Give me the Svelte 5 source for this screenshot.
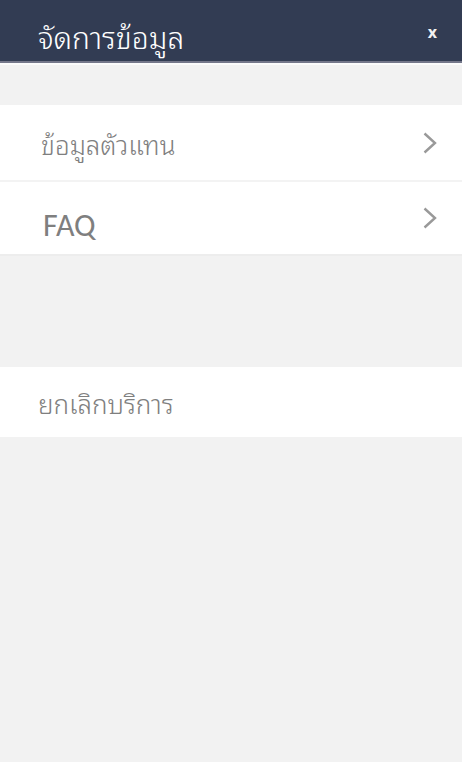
<script>
  const groups = [
    [
      { label: 'ข้อมูลตัวแทน', arrow: true },
      { label: 'FAQ', arrow: true, latin: true }
    ],
    [{ label: 'ยกเลิกบริการ', arrow: false }]
  ];
</script>

<div class="page">
  <header>
    <h1>จัดการข้อมูล</h1>
    <button class="close" aria-label="Close">x</button>
  </header>
  <main>
    {#each groups as group}
      <nav>
        {#each group as item}
          <a href="#item" class:latin={item.latin} class:plain={!item.arrow}>
            <span>{item.label}</span>
            {#if item.arrow}
              <svg viewBox="0 0 14 22" width="14" height="22" aria-hidden="true">
                <path d="M1.5 1.5 L12 11 L1.5 20.5" />
              </svg>
            {/if}
          </a>
        {/each}
      </nav>
    {/each}
  </main>
</div>

<style>
  :global(body) { background: #fff; }
  .page {
    min-height: calc(100vh - 1px);
    background: #f2f2f2;
    font-family: "Noto Sans Thai Looped", "Noto Sans", sans-serif;
    font-weight: 300;
  }
  header {
    display: flex;
    align-items: center;
    justify-content: space-between;
    height: 63px;
    padding: 0 21px 0 38px;
    box-sizing: border-box;
    background: #323c53;
    border-bottom: 2px solid #74778a;
    box-shadow: 0 2px #fbfbfb;
    color: #fff;
  }
  h1 { margin: 0; padding-top: 10px; font-size: 30px; line-height: 36px; font-weight: 300; }
  .close {
    border: 0;
    padding: 2px 4px 0;
    background: none;
    color: #f2f2f2;
    font: bold 16px/20px "Open Sans", sans-serif;
  }
  main { display: flex; flex-direction: column; gap: 111px; padding-top: 42px; }
  a {
    display: flex;
    align-items: center;
    justify-content: space-between;
    height: 77px;
    padding: 0 25px 0 41px;
    box-sizing: border-box;
    background: #fff;
    border-bottom: 2px solid #f3f3f3;
    color: #7f7f7f;
    font-size: 26px;
    line-height: 36px;
    text-decoration: none;
  }
  .latin {
    height: 74px;
    padding-left: 43px;
    border-color: #ededed;
    font-family: Carlito, Lato, sans-serif;
    font-weight: 400;
    font-size: 32px;
  }
  .latin span { padding-top: 16px; }
  .plain { height: 70px; border: 0; padding-left: 38px; }
  path { fill: none; stroke: #999; stroke-width: 2.4; }
</style>
